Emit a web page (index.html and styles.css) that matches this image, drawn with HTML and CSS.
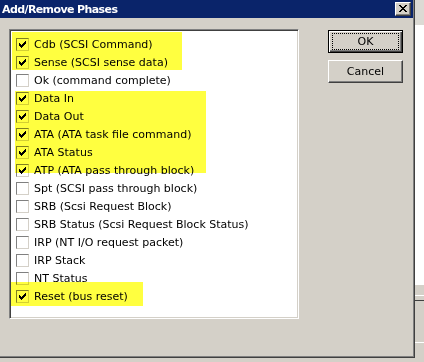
FILE: index.html
```html
<!DOCTYPE html>
<html>
<head>
<meta charset="utf-8">
<link rel="stylesheet" href="styles.css">
</head>
<body>
<div class="screen">
  <div class="window">
    <div class="titlebar">
      <span class="title">Add/Remove Phases</span>
      <button class="close" aria-label="Close">
        <svg width="8" height="7" viewBox="0 0 8 7" shape-rendering="crispEdges"><path fill="#000" d="M0 0h2v1H0z M6 0h2v1H6z M1 1h2v1H1z M5 1h2v1H5z M2 2h4v1H2z M3 3h2v1H3z M2 4h4v1H2z M1 5h2v1H1z M5 5h2v1H5z M0 6h2v1H0z M6 6h2v1H6z"/></svg>
      </button>
    </div>
    <div class="content">
      <div class="listbox">
        <ul class="list">
          <li class="row"><span class="cb on"></span><span>Cdb (SCSI Command)</span></li>
          <li class="row"><span class="cb on"></span><span>Sense (SCSI sense data)</span></li>
          <li class="row"><span class="cb"></span><span>Ok (command complete)</span></li>
          <li class="row"><span class="cb on"></span><span>Data In</span></li>
          <li class="row"><span class="cb on"></span><span>Data Out</span></li>
          <li class="row"><span class="cb on"></span><span>ATA (ATA task file command)</span></li>
          <li class="row"><span class="cb on"></span><span>ATA Status</span></li>
          <li class="row"><span class="cb on"></span><span>ATP (ATA pass through block)</span></li>
          <li class="row"><span class="cb"></span><span>Spt (SCSI pass through block)</span></li>
          <li class="row"><span class="cb"></span><span>SRB (Scsi Request Block)</span></li>
          <li class="row"><span class="cb"></span><span>SRB Status (Scsi Request Block Status)</span></li>
          <li class="row"><span class="cb"></span><span>IRP (NT I/O request packet)</span></li>
          <li class="row"><span class="cb"></span><span>IRP Stack</span></li>
          <li class="row"><span class="cb"></span><span>NT Status</span></li>
          <li class="row"><span class="cb on"></span><span>Reset (bus reset)</span></li>
        </ul>
        <div class="hl hl1"></div>
        <div class="hl hl2"></div>
        <div class="hl hl3"></div>
      </div>
      <div class="buttons">
        <button class="btn default"><span class="focus">OK</span></button>
        <button class="btn"><span class="label">Cancel</span></button>
      </div>
    </div>
  </div>
  <div class="side">
    <div class="side-top"></div>
    <div class="side-white"></div>
    <div class="side-line light l1"></div>
    <div class="side-line dark l2"></div>
    <div class="side-line light l3"></div>
  </div>
</div>
</body>
</html>
```
FILE: styles.css
```css
* { box-sizing: border-box; }
html, body { margin: 0; padding: 0; }
body {
  background: #d4d0c8;
  width: 424px;
  height: 362px;
  overflow: hidden;
  font-family: "DejaVu Sans", sans-serif;
  font-size: 11px;
  color: #000;
}
.screen { display: flex; height: 358px; }
.window {
  width: 415px;
  height: 358px;
  background: #d4d0c8;
  border-right: 1px solid #404040;
  border-bottom: 1px solid #404040;
  box-shadow: inset -1px -1px 0 #808080;
  display: flex;
  flex-direction: column;
}
.titlebar {
  width: 413px;
  height: 18px;
  background: #0a246a;
  display: flex;
  align-items: center;
  justify-content: space-between;
  padding: 0 2px 0 2px;
}
.title {
  color: #fff;
  font-weight: bold;
  font-size: 11px;
  letter-spacing: -0.6px;
}
.close {
  width: 16px;
  height: 14px;
  padding: 0 0 1px 0;
  margin: 0;
  background: #d4d0c8;
  border: 1px solid;
  border-color: #fff #404040 #404040 #fff;
  box-shadow: inset -1px -1px 0 #808080;
  display: flex;
  align-items: center;
  justify-content: center;
}
.close svg { display: block; }
.content {
  display: flex;
  align-items: flex-start;
  gap: 29px;
  padding: 11px 0 0 9px;
}
.listbox {
  position: relative;
  width: 290px;
  height: 290px;
  background: #fff;
  border: 1px solid;
  border-color: #808080 #fff #fff #808080;
  box-shadow: inset 1px 1px 0 #404040, inset -1px -1px 0 #d4d0c8;
  padding: 5px 0 0 6px;
}
.list { list-style: none; margin: 0; padding: 0; }
.row {
  height: 18px;
  display: flex;
  align-items: center;
  gap: 5px;
  white-space: nowrap;
}
.cb {
  flex: none;
  width: 13px;
  height: 13px;
  border: 1px solid;
  border-color: #808080 #d4d0c8 #d4d0c8 #808080;
  background: #fff;
  position: relative;
}
.cb.on {
  background: #fff url("data:image/svg+xml;utf8,<svg xmlns='http://www.w3.org/2000/svg' width='11' height='11' viewBox='0 0 11 11' shape-rendering='crispEdges'><path fill='black' d='M2 4h1v3H2z M3 5h1v3H3z M4 6h1v3H4z M5 5h1v3H5z M6 4h1v3H6z M7 3h1v3H7z M8 2h1v3H8z'/></svg>") no-repeat 0 0;
}
.hl {
  position: absolute;
  background: #ffff40;
  mix-blend-mode: multiply;
}
.hl1 { left: 2px; top: 2px; width: 170px; height: 38px; }
.hl2 { left: 5px; top: 61px; width: 191px; height: 82px; }
.hl3 { left: 1px; top: 252px; width: 132px; height: 24px; }
.buttons {
  display: flex;
  flex-direction: column;
  gap: 7px;
  margin-top: 1px;
}
.btn {
  width: 75px;
  height: 23px;
  margin: 0;
  padding: 0;
  background: #d4d0c8;
  border: 1px solid;
  border-color: #fff #404040 #404040 #fff;
  box-shadow: inset -1px -1px 0 #808080;
  font-family: "DejaVu Sans", sans-serif;
  font-size: 11px;
  color: #000;
  display: flex;
  align-items: stretch;
  justify-content: center;
}
.btn.default {
  border: 1px solid #000;
  box-shadow: inset 1px 1px 0 #fff, inset -1px -1px 0 #404040, inset -2px -2px 0 #808080;
  padding: 2px 3px 2px 3px;
}
.focus {
  flex: 1;
  border: 1px dotted #000;
  display: flex;
  align-items: center;
  justify-content: center;
}
.label {
  display: flex;
  align-items: center;
  justify-content: center;
  flex: 1;
}
.side {
  width: 9px;
  height: 358px;
  display: flex;
  flex-direction: column;
  background: #d4d0c8;
}
.side-top { height: 25px; background: #dcdad4; }
.side-white { height: 260px; background: #fff; }
.side-line { height: 1px; }
.side-line.light { background: #fff; }
.side-line.dark { background: #404040; }
.l1 { margin-top: 10px; }
.l2 { margin-top: 4px; }
.l3 { margin-top: 41px; }
```
